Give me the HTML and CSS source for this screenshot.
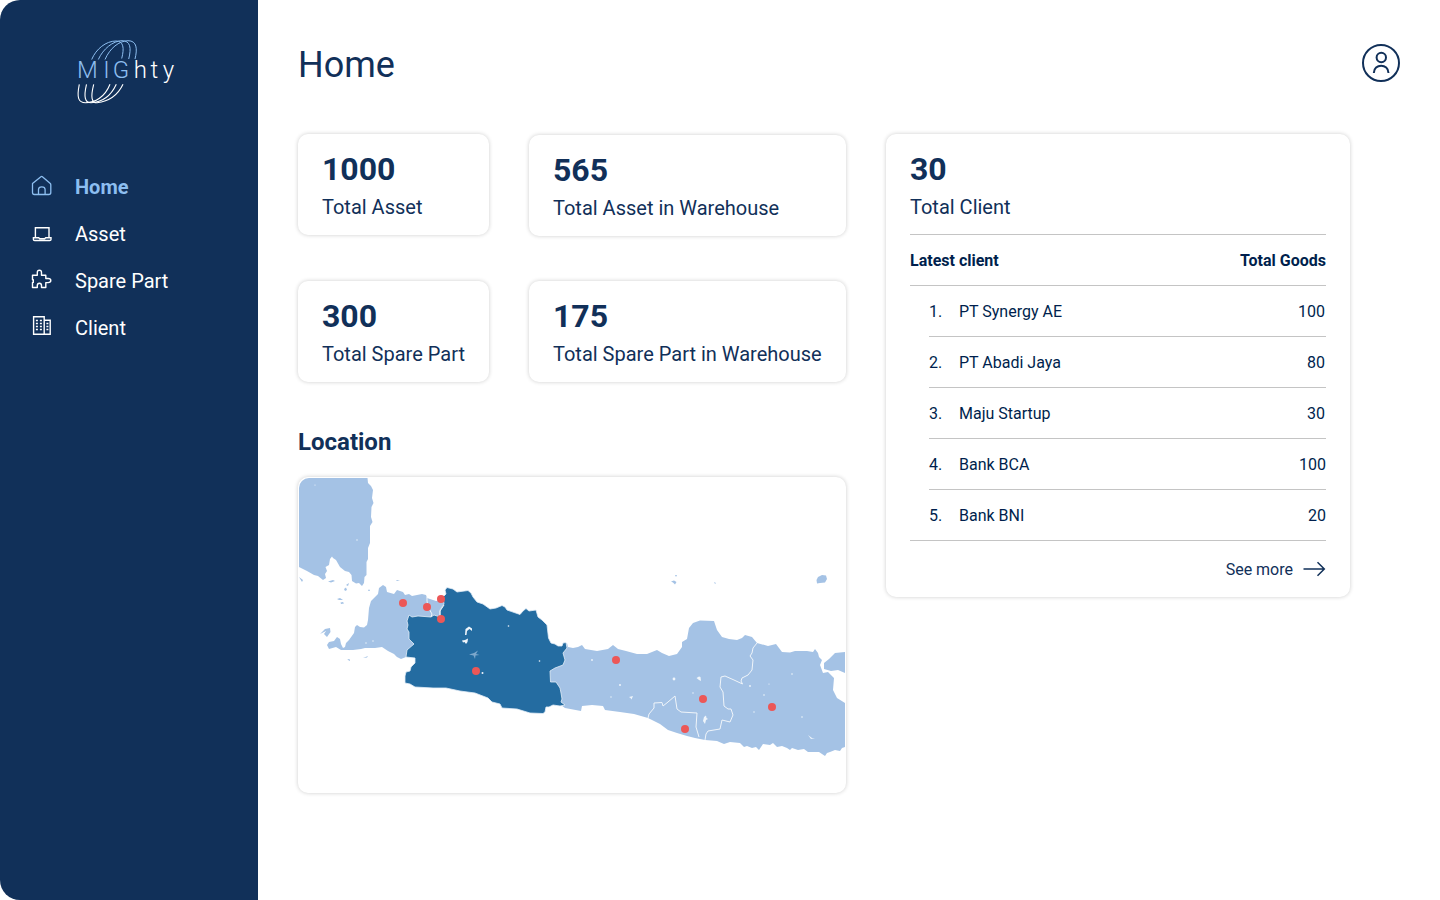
FILE: index.html
```html
<!DOCTYPE html>
<html lang="en">
<head>
<meta charset="utf-8">
<title>MIGhty - Home</title>
<link rel="stylesheet" href="styles.css">
</head>
<body>
<div class="app">
  <aside class="sidebar">
    <svg class="logo" width="104" height="72" viewBox="74 36 104 72" fill="none">
      <g stroke="#8dbef0" stroke-width="1">
        <path d="M91.700 59.500C96 49 106 41 116 41C123.500 41 124.500 48 121.700 58.500"/>
        <path d="M98.300 59.500C103 49 113 40.800 122 40.700C130.500 40.700 131.500 48 128.700 59"/>
        <path d="M105 59.500C110 48 119 41 128 40.700C137 40.700 137.500 49 135 59"/>
      </g>
      <g stroke="#fff" stroke-width="1.100">
        <path d="M79.300 84.300C76.500 98 78.500 102.800 85.500 102.800C95 102.800 105 97 110 84.300"/>
        <path d="M86.500 84.300C83.500 97 85 102.800 91 102.800C101 102.300 110.500 97 116.300 84.300"/>
        <path d="M93.700 84.300C90.500 97 91.500 102.800 97 102.800C108 101.500 117 97 123 84.300"/>
      </g>
      <g class="wordmark">
        <text fill="#8dbef0" x="77 103.300 112.800" y="77.800">MIG</text>
        <text fill="#fff" x="133.700 150.500 162.800" y="77.800">hty</text>
      </g>
    </svg>
    <nav class="nav">
      <a class="nav-item active">
        <svg width="24" height="24" viewBox="-.8 1 24 24" fill="none" stroke="currentColor" stroke-width="1.300" stroke-linejoin="round"><path d="M2.700 9.500 11.100 2.700Q11.850 2.100 12.600 2.700L20.500 9.500Q21 10 21 11V18.500Q21 20.500 19 20.500H4.500Q2.700 20.500 2.700 18.500Z"/><path d="M8.700 20.500V15.500Q8.700 12.800 12 12.800T15.300 15.500V20.500"/></svg>
        <span>Home</span>
      </a>
      <a class="nav-item">
        <svg width="24" height="24" viewBox="-.7 0 24 24" fill="none" stroke="currentColor" stroke-width="1.400"><path d="M5.700 15.500V5.700H19.300V15.500M3.700 15.800H9L10 16.800H15L16 15.800H21.300V17.500Q21.300 18.500 20 18.500H5Q3.700 18.500 3.700 17.500Z"/></svg>
        <span>Asset</span>
      </a>
      <a class="nav-item">
        <svg width="24" height="24" viewBox="-.8 .8 24 24" fill="none" stroke="currentColor" stroke-width="1.400" stroke-linejoin="round"><path d="M2.700 7H7.500V4.500Q7.500 2 9.600 2T11.700 4.500V7H16V10.300H18.300Q21 10.300 21 12.300T18.300 14.400H16V19.300H11.700V17.300Q11.700 15 9.600 15T7.500 17.300V19.300H2.700V14.200H3.500V11.500H2.700Z"/></svg>
        <span>Spare Part</span>
      </a>
      <a class="nav-item">
        <svg width="24" height="24" viewBox="-.9 1 24 24" fill="none" stroke="currentColor" stroke-width="1.400"><path d="M3.700 1.700H14.300V19.300H3.700ZM14.300 5.300H20.300V19.300H14.300"/><path d="M6 5.500H8M10 5.500H12M6 8.500H8M10 8.500H12M6 11.500H8M10 11.500H12M6 14.500H8M10 14.500H12M16.500 8.500H18.500M16.500 11.500H18.500M16.500 14.500H18.500"/></svg>
        <span>Client</span>
      </a>
    </nav>
  </aside>

  <main class="main">
    <header class="header">
      <h1>Home</h1>
      <svg width="40" height="40" viewBox="0 0 40 40" fill="none" stroke="#113059" stroke-width="2"><circle cx="20" cy="20" r="18"/><circle cx="20.300" cy="14.500" r="4.700"/><path d="M12.800 30C12.800 20.300 27.500 20.300 27.500 30"/></svg>
    </header>
    <div class="content">
      <div class="left">
        <section class="stats">
          <div class="card stat"><b>1000</b><span>Total Asset</span></div>
          <div class="card stat lower"><b>565</b><span>Total Asset in Warehouse</span></div>
          <div class="card stat"><b>300</b><span>Total Spare Part</span></div>
          <div class="card stat"><b>175</b><span>Total Spare Part in Warehouse</span></div>
        </section>
        <h2>Location</h2>
        <div class="card map">
          <svg width="546" height="315" viewBox="299 478 546 315">
            <g fill="#a4c2e5">
              <path d="M299 478H367.500L368 483 371 486 373 490 372 498 373.500 503 371.500 507 371 517 372.500 522 370 526 370 543 368 548 368 559 366.500 562 366.500 575 364.500 577 364 583 362 586 359 583 356 583.500 352 581 351.500 575 349 572 345 571 340 567 336 560 333 558 332 556.500 330 559 329 565 325.500 567 327 571 325 574 326 578 323 580 318 576 314 575 307 571 299 567Z"/>
              <path d="M383 585 379 588 378 594 371 601 369 608 368 620 367 625 364 627.500 360 627 357 625 355 627 354 633 349 640 346 643 345 647 343 648 341 644 340 639 337 637 334 641 329 642 327 645 329 649 336 647 341 650 353 650 361 649 365 648 375 648 382 647 388 651 394 654 397 657 401 659 406 657 412 650 420 617 441 617 445 600 436 601 427 598 426 595 422 594 412 596 409 594 405 595 403 592 397 590 394 594 387 592 386 587Z"/>
              <path d="M567 643 568 647 573 648 578 647 582 645 585 649 591 650 597 651 608 649 613 645 618 649 626 651 637 654 647 654 657 650 662 653 669 656 677 654 682 647 682 642 687 639 689 628 693 623 700 620.500 714 621 717 630 722 637 729 639 737 640 742 638 745 635 752 637 757 643 768 646 776 644 782 652 790 652.500 795 651 807 651 813 652 815 649 818 653 819 657 822 660 820 665 823 673 828 672 834 678 833 690 837 698 845 703V747L842 748 840 751 835 750 830 752 827 753 825 756 819 752 808 752 804 749 798 750 792 748 790 750 787 748 782 746 777 747 773 743 770 745 763 744 761 747 759 750 756 747 752 748 747 746 744 747 740 743 730 742 724 744 717 741 705 740 695 738 687 736 677 733 668 730 660 724 648 718 634 714 620 712 605 710 603 706 592 705 582 706 581 711 565 708 540 690 552 655Z"/>
              <path d="M845 652 835 653 829 659 824 663 824 669 831 671 838 670 845 673ZM816.500 580 818 577 822 575 826 575.500 827 579 825 582.500 820 583 817 583.500ZM299 577 303 580 302 582ZM328 581.500 333 580 335 581 331 582.500ZM344 589 346 587.500 347 590 345 591ZM346 585 349 583 348 586ZM337 599 340 598 343 600 339 600ZM340.500 602.500 343 602 344 603.500 341 604ZM320 634 325 629 330 628 330.500 632 327 637 324 634 326 631ZM347.500 659 350 659.500 350 661 348 660ZM363 658 368 656 367 657.500ZM671 581.500 674 580.500 676.500 582 675 584.500 673 582.500ZM675 575 677 575 676 577ZM369 589 370 591 368 591ZM396 580 400 580 397 581ZM714 582 716 583 715 584Z"/>
            </g>
            <path fill="#246ca1" stroke="#e3edf7" stroke-width=".8" stroke-linejoin="round" d="M409 615 412 617 418 616 431 617 434 615 440 617 440 610 444 604 443 597 446 594 445 590 447 587.500 453 589 457 592 468 590.500 471 593 473 597 477 602 483 604 490 609 496 608 502 605.500 505 607 507 610 520 614.500 523 611 526 608.500 529 611 536 610 538 617 542 620 547 625 548.500 638 551 643 555 644 558 646 562 646 563 643 566 642.500 567 648 563 653 565 660 563 665 555 668 550 671 550.500 682 556 682 560 688 561 693 562 699 561 702 565 705 560 706 553 705 549 707 546 707 545 712 543 713.500 530 713 517 709 502 708 500 704 492 702 488 698 475 693 460 691 446 688 433 688 415 687 410 684 405 683 405 676 406 672 410 671 411 667 415 663 415 658 406 657 407 650 414 644 409 639 409 632 407 629 408 625 407 621Z"/>
            <g fill="none" stroke="#f0f5fa" stroke-width="1">
              <path d="M757 643 753 648 752 653 750 656 753 660 752 670 748 675 742 678 741 681 742.500 684 734 680 725 676 721 677 720 687 723 692 724 706 728 709 731 709 733 715 730 722 722 720 720 729 708 731 706 734 705 740"/>
              <path d="M648 718 649 714 654 708 654 703 662 702.500 663 706 668 702 675 696 677 709 681 712 697 713 696 727 699 737"/>
              <path d="M427 597 427 601 428 607 432 614 431 617M440 617 440 611 444 605"/>
            </g>
            <g fill="#eff5fb">
              <path d="M465 635 465.500 629 469 626.500 472 628.500 472 631 469.500 629 467 631 466.500 635ZM462 640.500 465 640 468 638.500 467.500 642 466 644 464.500 642 463 642.500ZM696.500 678 699 676.500 700.500 677 701 681 699 680ZM703 721 704 717 706 715.500 706.500 718 708 719 706 720 705 724ZM808 735 812 738 815 738 811 739ZM629 697 633 696 631.500 699.500 630.500 698Z"/>
              <circle cx="674" cy="679" r="1.400"/><circle cx="508.500" cy="626" r=".8"/><circle cx="539.500" cy="661" r=".8"/><circle cx="482.500" cy="673" r="1"/>
              <circle cx="592" cy="660" r=".9"/><circle cx="620" cy="685" r="1"/><circle cx="611" cy="697" r=".7"/><circle cx="693" cy="693" r=".7"/><circle cx="750" cy="686" r=".9"/><circle cx="764" cy="695" r=".8"/><circle cx="769" cy="684" r=".6"/><circle cx="792" cy="674" r=".8"/><circle cx="802" cy="717" r=".8"/><circle cx="754" cy="712" r=".7"/><circle cx="315" cy="485" r=".6"/><circle cx="357" cy="540" r=".7"/><circle cx="373" cy="641" r=".7"/><circle cx="366" cy="643" r=".7"/>
            </g>
            <path fill="#7da8cc" d="M469 654.500 474 653 478 650.500 476 654 479.500 655 475.500 655.500 475 659 473.500 655.500Z"/>
            <g fill="#ec5757"><circle cx="403" cy="603" r="4"/><circle cx="427" cy="607" r="4"/><circle cx="441" cy="599" r="4"/><circle cx="441" cy="619" r="4"/><circle cx="476" cy="671" r="4"/><circle cx="616" cy="660" r="4"/><circle cx="703" cy="699" r="4"/><circle cx="685" cy="729" r="4"/><circle cx="772" cy="707" r="4"/></g>
          </svg>
        </div>
      </div>
      <section class="card clients">
        <div class="total"><b>30</b><span>Total Client</span></div>
        <div class="table-head"><span>Latest client</span><span>Total Goods</span></div>
        <ol class="rows">
          <li class="inset"><i>1.</i><span>PT Synergy AE</span><em>100</em></li>
          <li class="inset"><i>2.</i><span>PT Abadi Jaya</span><em>80</em></li>
          <li class="inset"><i>3.</i><span>Maju Startup</span><em>30</em></li>
          <li><i>4.</i><span>Bank BCA</span><em>100</em></li>
          <li><i>5.</i><span>Bank BNI</span><em>20</em></li>
        </ol>
        <a class="more"><span>See more</span><svg width="23" height="16" viewBox="0 0 23 16" fill="none" stroke="#113059" stroke-width="1.500"><path d="M.5 8H21M14.500 1.300 21.300 8 14.500 14.700"/></svg></a>
      </section>
    </div>
  </main>
</div>
</body>
</html>
```

FILE: styles.css
```css
* { box-sizing: border-box; }
body { margin: 0; background: #fff; color: #113059; font-family: Roboto, sans-serif; }
.app { display: flex; height: 900px; width: 1440px; overflow: hidden; }
.sidebar { width: 258px; background: #113059; border-radius: 20px 0 0 20px; padding-top: 36px; }
.logo { display: block; margin-left: 74px; }
.wordmark { font-size: 24px; font-weight: 300; }
.nav { display: flex; flex-direction: column; gap: 23px; margin-top: 67px; padding-left: 29px; }
.nav-item { display: flex; align-items: center; gap: 22px; height: 24px; font-size: 20px; line-height: 24px; color: #fff; }
.nav-item.active { color: #8dbef0; font-weight: 700; }
.main { width: 1182px; padding: 43px 39px 0 40px; }
.header { display: flex; justify-content: space-between; height: 91px; }
h1 { margin: 0; font-size: 36px; line-height: 44px; font-weight: 400; }
.content { display: flex; align-items: flex-start; gap: 40px; }
.left { width: 548px; }
.card { background: #fff; border-radius: 10px; box-shadow: 0 0 4px rgba(0, 0, 0, .2); }
.stats { display: grid; grid-template-columns: 191px 317px; grid-template-rows: 101px 101px; gap: 46px 40px; }
.stat, .total { display: flex; flex-direction: column; }
.stat { padding: 15px 24px; }
.stat.lower { margin: 1px 0 -1px; }
.stat b, .total b { font-size: 32px; line-height: 40px; }
.stat span, .total span { font-size: 20px; line-height: 24px; margin-top: 6px; white-space: nowrap; }
h2 { margin: 46px 0 21px; font-size: 24px; line-height: 28px; }
.map { height: 316px; padding: 1px; }
.map svg { display: block; border-radius: 10px; }
.clients { width: 464px; height: 463px; padding: 15px 24px; color: #001f4d; }
.total { height: 86px; border-bottom: 1px solid #c4c4c4; color: #113059; }
.table-head { display: flex; justify-content: space-between; height: 51px; line-height: 51px; border-bottom: 1px solid #c4c4c4; font-size: 16px; font-weight: 700; }
.rows { margin: 0; padding: 0; list-style: none; border-bottom: 1px solid #c4c4c4; font-size: 16px; }
.rows li { display: flex; height: 51px; line-height: 51px; margin-left: 19px; border-bottom: 1px solid #c4c4c4; }
.rows li:last-child { height: 50px; border-bottom: 0; }
.rows i { width: 30px; font-style: normal; }
.rows em { margin-left: auto; font-style: normal; }
.rows .inset em { padding-right: 1px; }
.more { display: flex; justify-content: flex-end; align-items: center; gap: 10px; height: 56px; font-size: 16px; color: #113059; }
```
